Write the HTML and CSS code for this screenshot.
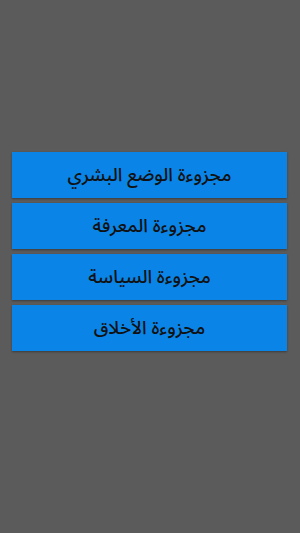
FILE: index.html
```html
<!DOCTYPE html>
<html lang="ar" dir="rtl">
<head>
<meta charset="utf-8">
<link rel="stylesheet" href="styles.css">
</head>
<body>
<div class="menu">
  <div class="btn">مجزوءة الوضع البشري</div>
  <div class="btn">مجزوءة المعرفة</div>
  <div class="btn">مجزوءة السياسة</div>
  <div class="btn">مجزوءة الأخلاق</div>
</div>
</body>
</html>
```
FILE: styles.css
```css
html, body {
  margin: 0;
  padding: 0;
  height: 100%;
}
body {
  background: #5b5b5b;
  font-family: "Noto Sans Arabic", "DejaVu Sans", sans-serif;
}
.menu {
  padding: 152px 13px 0 12px;
  display: flex;
  flex-direction: column;
  gap: 5px;
}
.btn {
  height: 46px;
  background: #0a84e6;
  color: #111;
  display: flex;
  align-items: center;
  justify-content: center;
  font-size: 18.5px;
  font-weight: 500;
  box-shadow: 0 1px 2px rgba(0,0,0,0.35);
}
```
